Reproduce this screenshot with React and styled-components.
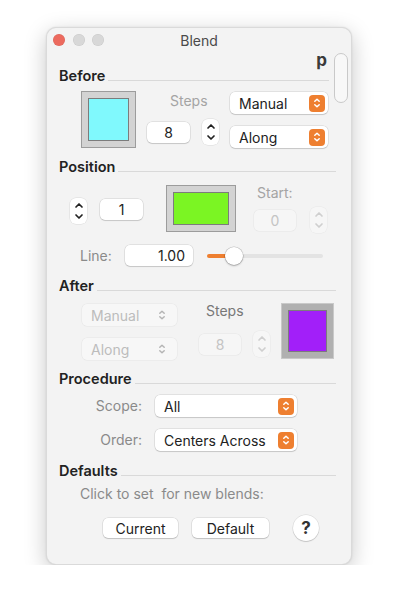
import React from 'react';
import styled, { createGlobalStyle } from 'styled-components';

const Global = createGlobalStyle`
  body {
    margin: 0;
    background: #ffffff;
    font-family: 'Inter', 'Liberation Sans', sans-serif;
    font-size: 14px;
    color: #262626;
  }
`;

const Window = styled.div`
  position: relative;
  box-sizing: border-box;
  margin: 27px 0 0 46px;
  width: 306px;
  height: 538px;
  border-radius: 10px;
  background: #f3f3f3;
  border: 1px solid rgba(0, 0, 0, 0.1);
  box-shadow: 0 6px 22px rgba(0, 0, 0, 0.22), 0 0 2px rgba(0, 0, 0, 0.1);
  overflow: hidden;
`;

const TitleBar = styled.div`
  position: relative;
  height: 24px;
  display: flex;
  align-items: center;
  justify-content: center;
  color: #4a4a4a;
  font-size: 14px;
`;

const Lights = styled.div`
  position: absolute;
  left: 6px;
  top: 6px;
  display: flex;
  gap: 7.5px;
`;

const Light = styled.span`
  width: 12px;
  height: 12px;
  border-radius: 50%;
  background: ${p => (p.red ? '#ec6a5e' : '#d8d8d8')};
  box-shadow: inset 0 0 0 0.5px rgba(0, 0, 0, 0.08);
`;

const Scroll = styled.div`
  position: absolute;
  right: 3px;
  top: 25px;
  width: 12px;
  height: 48px;
  border-radius: 7px;
  border: 1px solid #c9c9c9;
  background: #f8f8f8;
`;

const Content = styled.div`
  padding: 0 15px 0 12px;
`;

const PRow = styled.div`
  display: flex;
  justify-content: flex-end;
  height: 13px;
  padding-right: 9px;
  margin-top: 1px;
  font-weight: 700;
  font-size: 17px;
  line-height: 14px;
  color: #3a3a3a;
`;

const Header = styled.div`
  display: flex;
  align-items: center;
  gap: 3px;
  font-weight: 600;
  font-size: 14.5px;
  color: #222;
  height: 18px;
  margin-top: ${p => p.top || 0}px;

  &::after {
    content: '';
    flex: 1;
    height: 1px;
    background: #d9d9d9;
    margin-top: 10px;
    margin-right: ${p => p.lineRight || 0}px;
  }
`;

const Row = styled.div`
  display: flex;
  align-items: ${p => p.align || 'flex-start'};
  margin-left: ${p => p.left || 0}px;
  margin-top: ${p => p.top || 0}px;
  gap: ${p => p.gap || 0}px;
`;

const Col = styled.div`
  display: flex;
  flex-direction: column;
  align-items: ${p => p.align || 'flex-start'};
  width: ${p => (p.w ? `${p.w}px` : 'auto')};
  margin-left: ${p => p.left || 0}px;
  margin-top: ${p => p.top || 0}px;
  gap: ${p => p.gap || 0}px;
`;

const Frame = styled.div`
  box-sizing: border-box;
  width: ${p => p.w}px;
  height: ${p => p.h}px;
  padding: 6px;
  background: ${p => (p.dark ? '#b0b0b0' : '#d3d3d3')};
  border: 1px solid ${p => (p.dark ? '#c9c9c9' : '#9c9c9c')};
  flex-shrink: 0;
  margin-left: ${p => p.left || 0}px;
`;

const Swatch = styled.div`
  width: 100%;
  height: 100%;
  box-sizing: border-box;
  background: ${p => p.color};
  border: 1px solid #7c7c7c;
`;

const Label = styled.div`
  color: ${p => p.color || (p.dim ? '#a4a4a4' : '#8a8a8a')};
  font-size: 14px;
  line-height: 16px;
  text-align: ${p => (p.right ? 'right' : 'left')};
  width: ${p => (p.w ? `${p.w}px` : 'auto')};
  margin-left: ${p => p.left || 0}px;
  margin-top: ${p => p.top || 0}px;
`;

const Field = styled.div`
  box-sizing: border-box;
  width: ${p => p.w}px;
  height: 21px;
  border-radius: 5px;
  display: flex;
  align-items: center;
  justify-content: ${p => (p.end ? 'flex-end' : 'center')};
  padding-right: ${p => (p.end ? '8px' : '0')};
  font-size: 14px;
  background: ${p => (p.off ? '#f6f6f6' : '#fff')};
  color: ${p => (p.off ? '#c4c4c4' : '#222')};
  box-shadow: ${p =>
    p.off
      ? '0 0 0 0.5px rgba(0,0,0,0.06)'
      : '0 0 0 0.5px rgba(0,0,0,0.14), 0 1px 1px rgba(0,0,0,0.12)'};
  margin-left: ${p => p.left || 0}px;
  margin-top: ${p => p.top || 0}px;
`;

const Popup = styled.div`
  box-sizing: border-box;
  width: ${p => p.w}px;
  height: 22px;
  border-radius: 5px;
  display: flex;
  align-items: center;
  justify-content: space-between;
  padding: 0 3px 0 9px;
  font-size: 14px;
  background: ${p => (p.off ? '#f7f7f7' : '#fff')};
  color: ${p => (p.off ? '#bcbcbc' : '#222')};
  box-shadow: ${p =>
    p.off
      ? '0 0 0 0.5px rgba(0,0,0,0.06)'
      : '0 0 0 0.5px rgba(0,0,0,0.14), 0 1px 1px rgba(0,0,0,0.12)'};
`;

const Chev = styled.span`
  width: 16px;
  height: 17px;
  border-radius: 4px;
  display: flex;
  align-items: center;
  justify-content: center;
  background: ${p => (p.off ? 'transparent' : '#ee7f30')};
  margin-right: ${p => (p.off ? '4px' : '0')};
`;

const Stepper = styled.div`
  box-sizing: border-box;
  width: 17px;
  height: 26px;
  border-radius: 6px;
  display: flex;
  flex-direction: column;
  align-items: center;
  justify-content: space-around;
  padding: 2px 0;
  background: ${p => (p.off ? '#f6f6f6' : '#fff')};
  box-shadow: 0 0 0 0.5px rgba(0, 0, 0, ${p => (p.off ? 0.05 : 0.1)});
  margin-left: ${p => p.left || 0}px;
  margin-top: ${p => p.top || 0}px;
`;

const Slider = styled.div`
  position: relative;
  width: 116px;
  height: 20px;
  display: flex;
  align-items: center;
  margin-left: 14px;
`;

const Track = styled.div`
  flex: 1;
  height: 4px;
  border-radius: 2px;
  background: #e3e3e3;
`;

const Fill = styled.div`
  height: 4px;
  border-radius: 2px;
  background: #ee7f30;
`;

const Thumb = styled.div`
  position: absolute;
  top: 1px;
  width: 18px;
  height: 18px;
  border-radius: 50%;
  background: #fff;
  box-shadow: 0 0 0 0.5px rgba(0, 0, 0, 0.2), 0 1px 2px rgba(0, 0, 0, 0.25);
`;

const Button = styled.div`
  box-sizing: border-box;
  width: ${p => p.w}px;
  height: 20px;
  border-radius: 5px;
  background: #fff;
  display: flex;
  align-items: center;
  justify-content: center;
  font-size: 14px;
  color: #222;
  box-shadow: 0 0 0 0.5px rgba(0, 0, 0, 0.14), 0 1px 1px rgba(0, 0, 0, 0.14);
`;

const Help = styled.div`
  width: 26px;
  height: 26px;
  border-radius: 50%;
  background: #fff;
  display: flex;
  align-items: center;
  justify-content: center;
  font-weight: 700;
  font-size: 17px;
  color: #333;
  margin-left: 10px;
  box-shadow: 0 0 0 0.5px rgba(0, 0, 0, 0.12), 0 1px 1px rgba(0, 0, 0, 0.14);
`;

const Note = styled.div`
  color: #8a8a8a;
  font-size: 14px;
  margin: 6px 0 0 21px;
  white-space: pre;
`;

const UpDown = ({ color = '#fff', size = 10 }) => (
  <svg width={size} height={size + 2} viewBox="0 0 10 12" fill="none">
    <path d="M2.8 4.3 5 2.2l2.2 2.1M2.8 7.7 5 9.8l2.2-2.1" stroke={color} strokeWidth="1.5" strokeLinecap="round" strokeLinejoin="round" />
  </svg>
);

const Caret = ({ up, color }) => (
  <svg width="10" height="7" viewBox="0 0 10 7" fill="none">
    <path d={up ? 'M2 5 5 2l3 3' : 'M2 2l3 3 3-3'} stroke={color} strokeWidth="1.7" strokeLinecap="round" strokeLinejoin="round" />
  </svg>
);

const Step = ({ off, left, top }) => (
  <Stepper off={off} left={left} top={top}>
    <Caret up color={off ? '#cfcfcf' : '#222'} />
    <Caret color={off ? '#cfcfcf' : '#222'} />
  </Stepper>
);

const Select = ({ w, off, children }) => (
  <Popup w={w} off={off}>
    <span>{children}</span>
    <Chev off={off}>
      <UpDown color={off ? '#b5b5b5' : '#fff'} />
    </Chev>
  </Popup>
);

const App = () => {
  const line = 0.2;
  return (
    <>
      <Global />
      <Window>
        <TitleBar>
          <Lights>
            <Light red />
            <Light />
            <Light />
          </Lights>
          Blend
        </TitleBar>
        <Scroll />
        <Content>
          <PRow>p</PRow>

          <Header lineRight={7}>Before</Header>
          <Row left={22} top={7}>
            <Frame w={55} h={57}>
              <Swatch color="#80f9fd" />
            </Frame>
            <Col left={11} w={72}>
              <Label left={23} top={2} dim>Steps</Label>
              <Row top={10} align="center">
                <Field w={43}>8</Field>
                <Step left={12} />
              </Row>
            </Col>
            <Col left={11} top={1} gap={12}>
              <Select w={98}>Manual</Select>
              <Select w={98}>Along</Select>
            </Col>
          </Row>

          <Header top={9}>Position</Header>
          <Row left={11} top={10}>
            <Step top={13} />
            <Field w={43} left={13} top={14}>1</Field>
            <Frame w={70} h={47} left={23}>
              <Swatch color="#7bf523" />
            </Frame>
            <Col left={18} gap={6}>
              <Label dim left={3}>Start:</Label>
              <Row align="center">
                <Field w={42} off>0</Field>
                <Step off left={14} />
              </Row>
            </Col>
          </Row>
          <Row left={21} top={12} align="center">
            <Label w={45}>Line:</Label>
            <Field w={68} end>1.00</Field>
            <Slider>
              <Fill style={{ width: `${line * 100}%` }} />
              <Track />
              <Thumb style={{ left: `calc(${line * 100}% - 5px)` }} />
            </Slider>
          </Row>

          <Header top={10}>After</Header>
          <Row left={23} top={9}>
            <Col top={1} gap={12}>
              <Select w={95} off>Manual</Select>
              <Select w={95} off>Along</Select>
            </Col>
            <Col left={22}>
              <Label left={7} color="#777">Steps</Label>
              <Row top={12} align="center">
                <Field w={42} off>8</Field>
                <Step off left={12} />
              </Row>
            </Col>
            <Frame w={53} h={56} dark left={11}>
              <Swatch color="#a21ff9" />
            </Frame>
          </Row>

          <Header top={9}>Procedure</Header>
          <Col top={8} gap={12}>
            <Row align="center">
              <Label w={83} right>Scope:</Label>
              <Row left={13}>
                <Select w={142}>All</Select>
              </Row>
            </Row>
            <Row align="center">
              <Label w={83} right>Order:</Label>
              <Row left={13}>
                <Select w={142}>Centers Across</Select>
              </Row>
            </Row>
          </Col>

          <Header top={10}>Defaults</Header>
          <Note>Click to set  for new blends:</Note>
          <Row left={44} top={13} align="center" gap={14}>
            <Button w={75}>Current</Button>
            <Button w={77}>Default</Button>
            <Help>?</Help>
          </Row>
        </Content>
      </Window>
    </>
  );
};

export default App;
